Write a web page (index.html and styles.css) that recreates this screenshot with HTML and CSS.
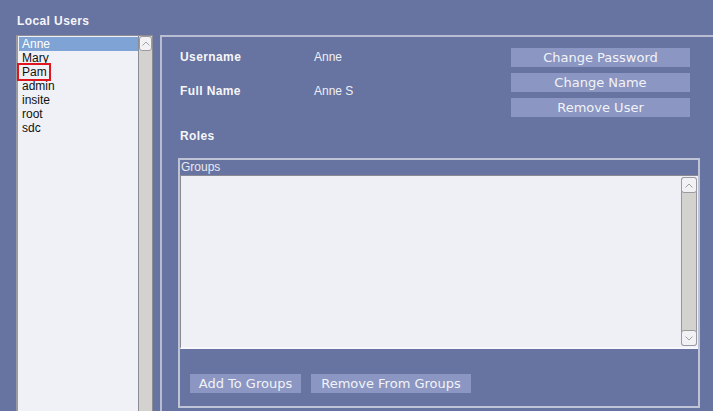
FILE: index.html
```html
<!DOCTYPE html>
<html>
<head>
<meta charset="utf-8">
<link rel="stylesheet" href="styles.css">
</head>
<body>
<div class="app">
  <div class="title">Local Users</div>
  <div class="main">
    <div class="userlist">
      <div class="items">
        <div class="item sel">Anne</div>
        <div class="item">Mary</div>
        <div class="item">Pam<span class="mark"></span></div>
        <div class="item">admin</div>
        <div class="item">insite</div>
        <div class="item">root</div>
        <div class="item">sdc</div>
      </div>
      <div class="vscroll small">
        <div class="sbtn"><svg width="8" height="5" viewBox="0 0 8 5"><path d="M0.5 4.5 L4 1 L7.5 4.5" fill="none" stroke="#a2a2a6" stroke-width="1"/></svg></div>
        <div class="track"></div>
      </div>
    </div>
    <div class="panel">
      <div class="top">
        <div class="fields">
          <div class="row"><span class="label">Username</span><span class="value">Anne</span></div>
          <div class="row r2"><span class="label">Full Name</span><span class="value">Anne S</span></div>
          <div class="row r3"><span class="label">Roles</span></div>
        </div>
        <div class="actions">
          <div class="btn wide">Change Password</div>
          <div class="btn wide">Change Name</div>
          <div class="btn wide">Remove User</div>
        </div>
      </div>
      <div class="groups">
        <div class="gtitle">Groups</div>
        <div class="glist">
          <div class="gitems"></div>
          <div class="vscroll big">
            <div class="sbtn"><svg width="8" height="5" viewBox="0 0 8 5"><path d="M0.5 4.5 L4 1 L7.5 4.5" fill="none" stroke="#a2a2a6" stroke-width="1"/></svg></div>
            <div class="track"></div>
            <div class="sbtn"><svg width="8" height="5" viewBox="0 0 8 5"><path d="M0.5 0.5 L4 4 L7.5 0.5" fill="none" stroke="#a2a2a6" stroke-width="1"/></svg></div>
          </div>
        </div>
        <div class="gbtns">
          <div class="btn b1">Add To Groups</div>
          <div class="btn b2">Remove From Groups</div>
        </div>
      </div>
    </div>
  </div>
</div>
</body>
</html>
```
FILE: styles.css
```css
html, body {
  margin: 0;
  padding: 0;
}
body {
  width: 713px;
  height: 411px;
  overflow: hidden;
  background: #6773a0;
  font-family: "Liberation Sans", Arial, sans-serif;
}
.app {
  width: 713px;
  height: 411px;
  box-sizing: border-box;
  padding-left: 16px;
  overflow: hidden;
}
.title {
  padding-top: 14px;
  padding-left: 1px;
  height: 14px;
  line-height: 14px;
  margin-bottom: 7px;
  font-size: 12px;
  font-weight: bold;
  letter-spacing: 0.4px;
  color: #f6f6fa;
}
.main {
  display: flex;
  height: 376px;
  overflow: hidden;
}
.userlist {
  width: 137px;
  height: 390px;
  flex: none;
  box-sizing: border-box;
  border: 1px solid #8c8c94;
  border-left: 2px solid #9a9aa2;
  padding: 1px 0 0 1px;
  background: #f0f1f6;
  display: flex;
}
.items {
  flex: 1;
}
.item {
  position: relative;
  height: 14px;
  line-height: 14px;
  padding-left: 3px;
  font-size: 12px;
  color: #111;
}
.item.sel {
  background: #7ea3d4;
  color: #fff;
}
.mark {
  position: absolute;
  left: -2px;
  top: -2px;
  width: 30px;
  height: 14px;
  border: 2px solid #e0161e;
}
.vscroll {
  display: flex;
  flex-direction: column;
  background: #d4d2ce;
  box-sizing: border-box;
}
.vscroll.small {
  width: 14px;
  border-left: 1px solid #8c8c94;
  margin-top: -1px;
}
.vscroll.big {
  width: 16px;
  border: 1px solid #96969c;
  border-radius: 3px;
  margin: 1px 1px 1px 0;
}
.sbtn {
  height: 14px;
  box-sizing: border-box;
  border: 1px solid #9a9aa0;
  border-radius: 3px;
  background: #f2f2f5;
  display: flex;
  align-items: center;
  justify-content: center;
  flex: none;
}
.small .sbtn {
  height: 15px;
}
.vscroll.big .sbtn {
  margin: -1px;
  height: 16px;
}
.track {
  flex: 1;
}
.panel {
  flex: none;
  width: 570px;
  height: 390px;
  margin-left: 7px;
  border-top: 2px solid #b9bdd2;
  border-left: 2px solid #b9bdd2;
}
.top {
  display: flex;
  height: 121px;
}
.fields {
  width: 349px;
  box-sizing: border-box;
  padding: 13px 0 0 18px;
}
.row {
  display: flex;
  height: 14px;
  line-height: 14px;
  font-size: 12px;
}
.row.r2 {
  margin-top: 20px;
}
.row.r3 {
  margin-top: 31px;
}
.label {
  width: 134px;
  font-weight: bold;
  letter-spacing: 0.4px;
  color: #f6f6fa;
}
.value {
  color: #eef0f6;
}
.actions {
  padding-top: 11px;
  display: flex;
  flex-direction: column;
  gap: 6px;
}
.btn {
  height: 19px;
  line-height: 19px;
  background: #8b96c2;
  color: #f2f3f8;
  font-family: "DejaVu Sans", sans-serif;
  font-size: 13px;
  text-align: center;
}
.btn.wide {
  width: 179px;
}
.groups {
  margin-left: 16px;
  width: 522px;
  height: 250px;
  box-sizing: border-box;
  border: 2px solid #bfc3d6;
}
.gtitle {
  height: 15px;
  line-height: 14px;
  padding-left: 1px;
  font-size: 12px;
  color: #e8eaf2;
}
.glist {
  height: 174px;
  box-sizing: border-box;
  border-top: 1px solid #8a8a94;
  border-left: 1px solid #8a8a94;
  border-bottom: 2px solid #f8f8fc;
  background: #eff0f5;
  display: flex;
}
.gitems {
  flex: 1;
}
.gbtns {
  display: flex;
  gap: 10px;
  padding: 25px 0 0 10px;
}
.btn.b1 {
  width: 111px;
}
.btn.b2 {
  width: 160px;
}
```
